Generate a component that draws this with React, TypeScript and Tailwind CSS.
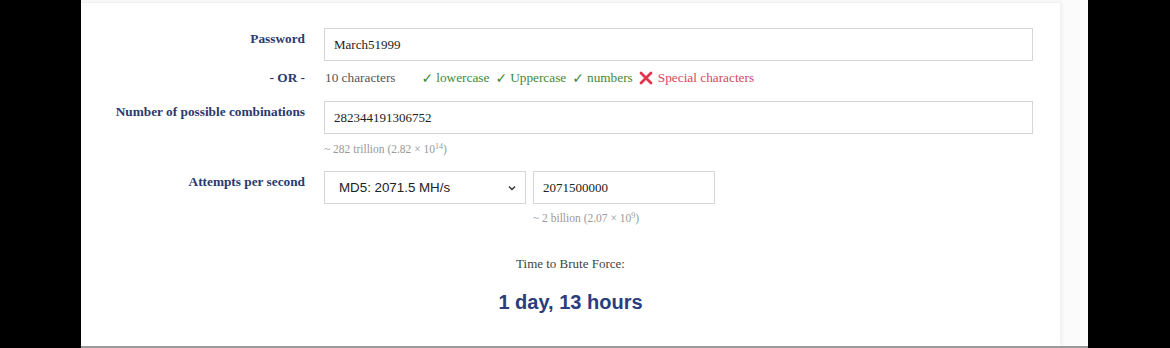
import React from "react";

const serif = { fontFamily: '"Liberation Serif", "Times New Roman", serif' };

function Label({ children }: { children: React.ReactNode }) {
  return (
    <div className="w-[224px] shrink-0 pt-[3px] text-right text-[13.3px] font-bold leading-[16px] text-[#2a3a70]">
      {children}
    </div>
  );
}

function Check({ children }: { children: React.ReactNode }) {
  return (
    <span className="mr-[6px] flex items-center text-[#3f8a3a]">
      <span
        className="mr-[3px] text-[14px] font-bold"
        style={{ fontFamily: '"DejaVu Sans", sans-serif' }}
      >
        ✓
      </span>
      {children}
    </span>
  );
}

export default function App() {
  return (
    <div className="flex h-[348px] w-[1170px] bg-black" style={serif}>
      <div className="w-[81px] shrink-0 bg-black" />
      <div className="flex w-[1007px] shrink-0 flex-col bg-[#fbfbfb]">
        <div className="flex-1 pt-[2px]">
          <div className="h-full w-[979px] border-t border-[#f0f0f0] bg-white shadow-[2px_0_4px_rgba(0,0,0,0.05)]">
            <div className="flex pt-[25px]">
              <Label>Password</Label>
              <div className="ml-[19px] flex h-[33px] w-[709px] items-center border border-[#d6d6d6] px-[9px] text-[13px] text-[#222]">
                March51999
              </div>
            </div>
            <div className="mt-[8px] flex h-[18px] items-center">
              <div className="w-[224px] shrink-0 text-right text-[13.3px] font-bold text-[#2a3a70]">- OR -</div>
              <div className="ml-[20px] flex items-center text-[13.3px]">
                <span className="mr-[26px] text-[#555]">10 characters</span>
                <Check>lowercase</Check>
                <Check>Uppercase</Check>
                <Check>numbers</Check>
                <svg width="14" height="14" viewBox="0 0 14 14" className="mr-[5px]">
                  <path d="M2 2 L12 12 M12 2 L2 12" stroke="#e4344c" strokeWidth="2.8" strokeLinecap="round" />
                </svg>
                <span className="text-[#d44a5c]">Special characters</span>
              </div>
            </div>
            <div className="mt-[14px] flex">
              <Label>Number of possible combinations</Label>
              <div className="ml-[19px] flex h-[33px] w-[709px] items-center border border-[#d6d6d6] px-[9px] text-[13px] text-[#222]">
                282344191306752
              </div>
            </div>
            <div className="ml-[243px] mt-[8px] text-[11.5px] leading-[14px] text-[#999]">
              ~ 282 trillion (2.82 × 10<sup className="text-[8px]">14</sup>)
            </div>
            <div className="mt-[15px] flex">
              <Label>Attempts per second</Label>
              <div className="ml-[19px] flex">
                <div
                  className="flex h-[33px] w-[202px] items-center justify-between border border-[#d6d6d6] pl-[14px] pr-[8px] text-[13.33px] text-[#222]"
                  style={{ fontFamily: '"Liberation Sans", Arial, sans-serif' }}
                >
                  <span>MD5: 2071.5 MH/s</span>
                  <svg width="10" height="10" viewBox="0 0 10 10">
                    <path d="M2 3.5 L5 6.5 L8 3.5" fill="none" stroke="#333" strokeWidth="1.4" />
                  </svg>
                </div>
                <div className="ml-[7px] flex flex-col">
                  <div className="flex h-[33px] w-[182px] items-center border border-[#d6d6d6] px-[9px] text-[13px] text-[#222]">
                    2071500000
                  </div>
                  <div className="mt-[7px] text-[11.5px] leading-[14px] text-[#999]">
                    ~ 2 billion (2.07 × 10<sup className="text-[8px]">9</sup>)
                  </div>
                </div>
              </div>
            </div>
            <div className="mt-[31px] text-center text-[13px] leading-[16px] text-[#444]">Time to Brute Force:</div>
            <div
              className="mt-[18px] text-center text-[20px] font-bold leading-[24px] text-[#2a3d7c]"
              style={{ fontFamily: '"Liberation Sans", Arial, sans-serif' }}
            >
              1 day, 13 hours
            </div>
          </div>
        </div>
        <div className="h-[2px] bg-[#9a9a9a]" />
      </div>
      <div className="flex-1 bg-black" />
    </div>
  );
}
